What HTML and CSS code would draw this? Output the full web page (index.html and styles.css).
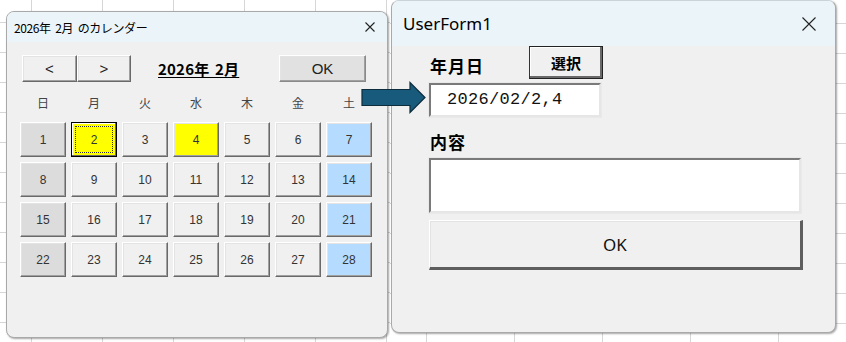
FILE: index.html
```html
<!DOCTYPE html>
<html lang="ja">
<head>
    <meta charset="UTF-8">
    <title>カレンダー</title>
    <link rel="stylesheet" href="styles.css">
</head>
<body>
    <div class="desk">
        <div class="pane pane-left">
            <div class="win cal">
                <div class="titlebar">
                    <span class="title">2026年&nbsp; 2月&nbsp; のカレンダー</span>
                    <svg class="close close-small" viewBox="0 0 10 10"><path d="M0.5 0.5 L9.5 9.5 M9.5 0.5 L0.5 9.5"/></svg>
                </div>
                <div class="cal-body">
                    <div class="nav">
                        <button class="btn">&lt;</button>
                        <button class="btn">&gt;</button>
                        <span class="month">2026年 2月</span>
                        <button class="btn ok-small">OK</button>
                    </div>
                    <div class="week">
                        <span>日</span><span>月</span><span>火</span><span>水</span><span>木</span><span>金</span><span>土</span>
                    </div>
                    <div class="days">
                        <button class="btn day sun">1</button>
                        <button class="btn day picked focus">2</button>
                        <button class="btn day">3</button>
                        <button class="btn day picked">4</button>
                        <button class="btn day">5</button>
                        <button class="btn day">6</button>
                        <button class="btn day sat">7</button>
                        <button class="btn day sun">8</button>
                        <button class="btn day">9</button>
                        <button class="btn day">10</button>
                        <button class="btn day">11</button>
                        <button class="btn day">12</button>
                        <button class="btn day">13</button>
                        <button class="btn day sat">14</button>
                        <button class="btn day sun">15</button>
                        <button class="btn day">16</button>
                        <button class="btn day">17</button>
                        <button class="btn day">18</button>
                        <button class="btn day">19</button>
                        <button class="btn day">20</button>
                        <button class="btn day sat">21</button>
                        <button class="btn day sun">22</button>
                        <button class="btn day">23</button>
                        <button class="btn day">24</button>
                        <button class="btn day">25</button>
                        <button class="btn day">26</button>
                        <button class="btn day">27</button>
                        <button class="btn day sat">28</button>
                    </div>
                </div>
            </div>
        </div>

        <div class="pane pane-right">
            <div class="win form">
                <div class="titlebar titlebar-big">
                    <span class="title title-big">UserForm1</span>
                    <svg class="close close-big" viewBox="0 0 14 14"><path d="M0.5 0.5 L13.5 13.5 M13.5 0.5 L0.5 13.5"/></svg>
                </div>
                <div class="form-body">
                    <div class="row-date">
                        <span class="label label-date">年月日</span>
                        <button class="btn pick">選択</button>
                    </div>
                    <div class="textbox textbox-date">2026/02/2,4</div>
                    <div class="label label-memo">内容</div>
                    <div class="textbox textbox-memo"></div>
                    <button class="btn ok-big">OK</button>
                </div>
            </div>
        </div>

        <svg class="arrow" width="66" height="34" viewBox="0 0 66 34">
            <path d="M1 8.5 H49 V1.5 L64 16.5 L49 31.5 V24.5 H1 Z"/>
        </svg>
    </div>
</body>
</html>
```

FILE: styles.css
```css
* {
    box-sizing: border-box;
    margin: 0;
    padding: 0;
}

body {
    width: 846px;
    height: 342px;
    overflow: hidden;
    background: #fff;
    font-family: "Noto Sans CJK JP", "Liberation Sans", sans-serif;
    color: #000;
}

.desk {
    position: relative;
    display: flex;
    width: 846px;
    height: 342px;
}

/* excel sheet behind the windows */
.pane {
    height: 342px;
    background-color: #fff;
}

.pane-left {
    width: 390px;
    padding: 11px 0 0 6px;
    background-image:
        linear-gradient(to right, #d6d6d6 1px, transparent 1px),
        linear-gradient(to bottom, #d6d6d6 1px, transparent 1px);
    background-size: 71px 100%, 100% 30px;
    background-position: 31px 0, 0 22px;
}

.pane-right {
    flex: 1;
    padding-left: 1px;
    background-image:
        linear-gradient(to right, #d6d6d6 1px, transparent 1px),
        linear-gradient(to bottom, #d6d6d6 1px, transparent 1px);
    background-size: 88px 100%, 100% 30px;
    background-position: 36px 0, 0 23px;
}

/* window frame */
.win {
    background: #f0f0f0;
    border: 1px solid #a9a9a9;
    border-radius: 8px;
    overflow: hidden;
    box-shadow: 1px 1px 2px rgba(0, 0, 0, 0.35);
}

.titlebar {
    display: flex;
    align-items: center;
    justify-content: space-between;
    height: 30px;
    padding: 0 12px 0 7px;
    background: #ebf4f8;
}

.title {
    font-size: 12px;
    letter-spacing: -0.4px;
}

.close {
    fill: none;
    stroke: #222;
    stroke-width: 1.1;
}

.close-small {
    width: 10px;
    height: 10px;
}

.close-big {
    width: 14px;
    height: 14px;
}

/* classic raised button */
.btn {
    display: flex;
    align-items: center;
    justify-content: center;
    background: #f0f0f0;
    border: 1px solid;
    border-color: #fff #696969 #696969 #fff;
    box-shadow: inset -1px -1px 0 #a0a0a0, inset 1px 1px 0 #e3e3e3;
    font-family: "Liberation Sans", sans-serif;
    color: #222;
}

/* calendar */
.cal {
    width: 382px;
    height: 327px;
}

.cal-body {
    padding-top: 13px;
}

.nav {
    display: grid;
    grid-template-columns: 55px 54px 148px 87px;
    height: 27px;
    margin-left: 15px;
}

.nav .btn {
    font-size: 15px;
    background: #f0f0f0;
}

.month {
    padding-left: 27px;
    align-self: center;
    font-size: 15px;
    font-weight: bold;
    text-decoration: underline;
    text-underline-offset: 2px;
    letter-spacing: 0.2px;
    word-spacing: 2px;
}

.nav .ok-small {
    background: #e1e1e1;
    font-size: 15px;
    border-color: #fff #8a8a8a #8a8a8a #fff;
}

.week {
    display: grid;
    grid-template-columns: repeat(7, 46px);
    column-gap: 5px;
    height: 18px;
    margin: 12px 0 10px 13px;
    font-size: 12px;
    line-height: 18px;
    text-align: center;
    color: #444;
}

.days {
    display: grid;
    grid-template-columns: repeat(7, 46px);
    grid-auto-rows: 35px;
    gap: 5px;
    margin-left: 13px;
}

.day {
    font-size: 12px;
    color: #333;
}

.day.sun {
    background: #dcdcdc;
}

.day.sat {
    background: #b5dcff;
}

.day.picked {
    background: #ffff00;
}

.day.focus {
    border-color: #000;
    box-shadow: inset -1px -1px 0 #696969, inset 1px 1px 0 #fff;
    outline: 1px dotted #333;
    outline-offset: -5px;
}

/* user form */
.form {
    width: 445px;
    height: 333px;
    border-top-color: #c9d3d8;
}

.titlebar-big {
    height: 45px;
    padding: 0 19px 0 11px;
}

.title-big {
    font-family: "Noto Sans", sans-serif;
    font-size: 17px;
    letter-spacing: 0;
}

.form-body {
    padding-left: 37px;
}

.row-date {
    display: flex;
    align-items: flex-end;
    height: 33px;
}

.label {
    font-size: 17px;
    font-weight: bold;
    letter-spacing: 1px;
}

.label-date {
    width: 100px;
    padding-left: 1px;
    line-height: 24px;
    margin-bottom: 1px;
}

.btn.pick {
    width: 74px;
    height: 33px;
    border-color: #222 #222 #222 #333;
    box-shadow: inset -2px -2px 0 #696969, inset 1px 1px 0 #fff;
    font-family: "Noto Sans CJK JP", sans-serif;
    font-size: 15px;
    font-weight: bold;
    color: #000;
}

.textbox {
    background: #fff;
    border: 2px solid;
    border-color: #7a7a7a #e6e6e6 #e6e6e6 #7a7a7a;
    outline: 1px solid #e9e9e9;
}

.textbox-date {
    width: 172px;
    height: 34px;
    margin-top: 4px;
    padding-left: 16px;
    font-family: "Liberation Mono", monospace;
    font-size: 17px;
    line-height: 30px;
    letter-spacing: 0.3px;
    color: #111;
}

.label-memo {
    margin-top: 13px;
    padding-left: 1px;
    line-height: 24px;
}

.textbox-memo {
    width: 372px;
    height: 55px;
    margin-top: 4px;
}

.btn.ok-big {
    width: 374px;
    height: 50px;
    margin-top: 7px;
    border-width: 1px 3px 3px 1px;
    border-color: #fff #5e5e5e #5e5e5e #fff;
    box-shadow: inset 1px 1px 0 #e3e3e3;
    font-family: "Noto Sans", sans-serif;
    font-size: 17px;
    color: #111;
}

/* arrow pointing from the calendar to the form */
.arrow {
    position: absolute;
    left: 361px;
    top: 81px;
}

.arrow path {
    fill: #175a7c;
    stroke: #0c2c3c;
    stroke-width: 1.2;
}
```
